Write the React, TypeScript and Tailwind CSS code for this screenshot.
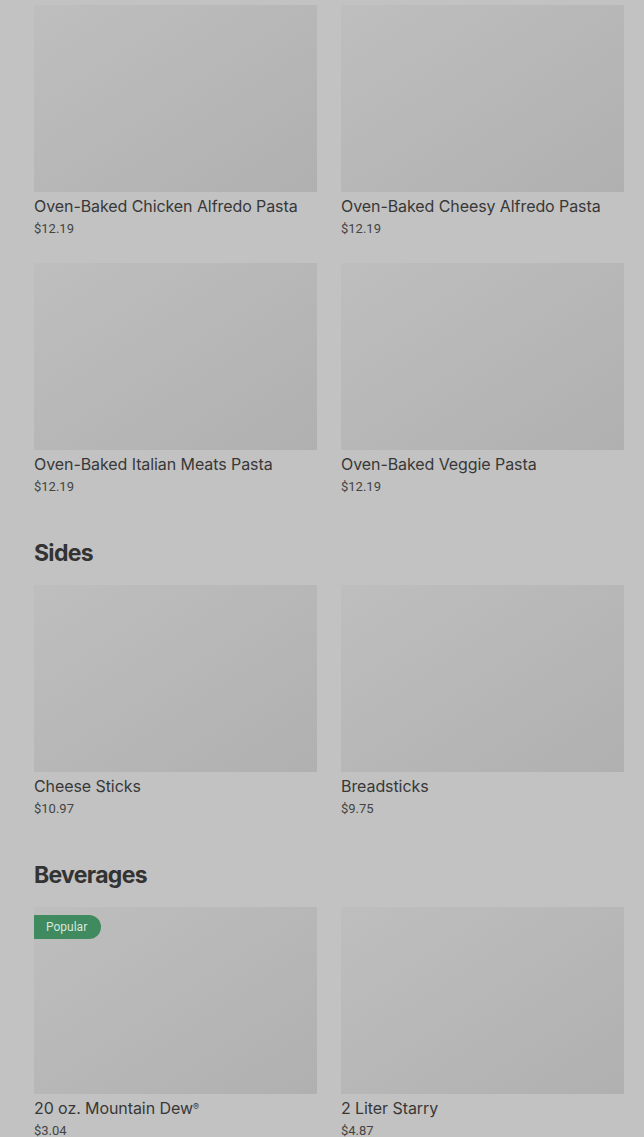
import React from "react";

type Item = { name: React.ReactNode; key: string; price: string; popular?: boolean };

const Card = ({ item }: { item: Item }) => (
  <div className="flex flex-col">
    <div className="relative h-[187px] w-full bg-gradient-to-br from-[#bebebe] via-[#b7b7b7] to-[#b0b0b0]">
      {item.popular && (
        <div className="absolute left-0 top-[8px] flex h-[24px] items-center rounded-r-full bg-[#3f8a5e] pl-[12px] pr-[14px] text-[12px] text-[#d9e6dd]">
          Popular
        </div>
      )}
    </div>
    <div className="mt-[2px] font-['Inter',sans-serif] text-[16px] leading-6 tracking-[-0.005em] text-[#383838]">
      {item.name}
    </div>
    <div className="mt-[1px] text-[13px] leading-5 text-[#444]">{item.price}</div>
  </div>
);

const Grid = ({ items }: { items: Item[] }) => (
  <div className="grid grid-cols-2 gap-x-6 gap-y-6">
    {items.map((it) => (
      <Card key={it.key} item={it} />
    ))}
  </div>
);

const Heading = ({ children }: { children: React.ReactNode }) => (
  <h2 className="mt-[40px] mb-[16px] font-['Inter',sans-serif] text-[23px] font-bold leading-8 tracking-[-0.03em] text-[#333]">
    {children}
  </h2>
);

const mk = (name: string, price: string, popular?: boolean): Item => ({ name, key: name, price, popular });

export default function App() {
  return (
    <div className="min-h-[1137px] w-full overflow-hidden bg-[#c2c2c2] pl-[34px] pr-[20px] pt-[5px] font-['Roboto',sans-serif]">
      <Grid
        items={[
          mk("Oven-Baked Chicken Alfredo Pasta", "$12.19"),
          mk("Oven-Baked Cheesy Alfredo Pasta", "$12.19"),
          mk("Oven-Baked Italian Meats Pasta", "$12.19"),
          mk("Oven-Baked Veggie Pasta", "$12.19"),
        ]}
      />
      <Heading>Sides</Heading>
      <Grid items={[mk("Cheese Sticks", "$10.97"), mk("Breadsticks", "$9.75")]} />
      <Heading>Beverages</Heading>
      <Grid
        items={[
          {
            key: "dew",
            name: (
              <>
                20 oz. Mountain Dew<sup className="text-[9px]">®</sup>
              </>
            ),
            price: "$3.04",
            popular: true,
          },
          mk("2 Liter Starry", "$4.87"),
        ]}
      />
    </div>
  );
}
